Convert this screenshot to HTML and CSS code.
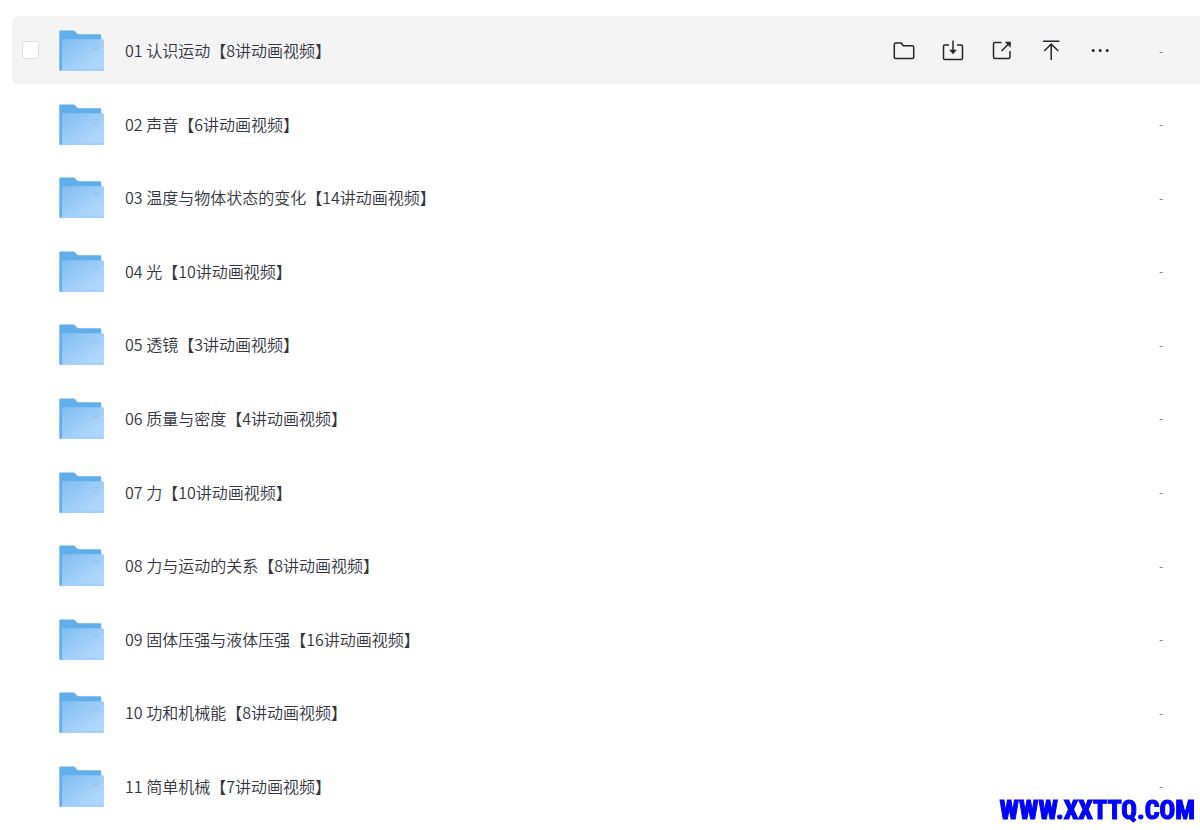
FILE: index.html
```
<!DOCTYPE html>
<html lang="zh-CN">
<head>
  <meta charset="UTF-8">
  <meta name="viewport" content="width=device-width, initial-scale=1.0">
  <title>动画视频</title>
  <link rel="stylesheet" href="styles.css">
</head>
<body>

  <!-- Icono de carpeta, compartido por todas las filas -->
  <svg class="sprite" aria-hidden="true">
    <defs>
      <linearGradient id="front" x1="0" y1="0" x2="1" y2="1">
        <stop offset="0" stop-color="#7fbdf2"/>
        <stop offset="0.75" stop-color="#add5fb"/>
        <stop offset="1" stop-color="#b2d9ff"/>
      </linearGradient>
    </defs>
    <symbol id="folder" viewBox="0 -2 46 44">
      <path d="M1 0.500H14.500Q15.500 0.500 16 1.200L18 3.600Q18.600 4.200 19.500 4.200H41Q42.200 4.200 42.200 5.400V41H1.500Q0.300 41 0.300 39.500V1.500Q0.300 0.500 1 0.500Z" fill="#62aeeb"/>
      <path d="M4 9.200H43.500Q45 9.200 45 10.700V39.500Q45 41 43.500 41H2.200Q3 40.500 3 39V10.200Q3 9.200 4 9.200Z" fill="url(#front)"/>
      <path d="M3 38.500H45V39.500Q45 41 43.500 41H2.200Q3 40.500 3 39Z" fill="#a2d0fa"/>
      <path d="M33.500 15.500H39.500M33.500 18.500H39.500" stroke="#8cc3f3" stroke-width="1"/>
    </symbol>
  </svg>

  <ul class="file-list" id="fileList">
    <li class="file-row active">
      <input type="checkbox" class="check" aria-label="01 认识运动【8讲动画视频】">
      <svg class="folder"><use href="#folder"/></svg>
      <a href="#" class="name">01 认识运动【8讲动画视频】</a>
      <div class="actions">
        <button type="button" aria-label="打开">
          <svg viewBox="0 -1 24 24"><path d="M3.800 4H9.200L11.200 6.800H20.200Q21.700 6.800 21.700 8.300V18Q21.700 19.500 20.200 19.500H3.800Q2.300 19.500 2.300 18V5.500Q2.300 4 3.800 4Z"/></svg>
        </button>
        <button type="button" aria-label="下载">
          <svg viewBox="0 -1 24 24"><path d="M8 6H3.800Q2.500 6 2.500 7.300V19.200Q2.500 20.500 3.800 20.500H20.200Q21.500 20.500 21.500 19.200V7.300Q21.500 6 20.200 6H16M12 1.500V13"/><path class="solid" d="M9.800 11.500H14.200L12 14Z"/></svg>
        </button>
        <button type="button" aria-label="分享">
          <svg viewBox="0 -1 24 24"><path d="M11.500 3.500H5Q3.500 3.500 3.500 5V18Q3.500 19.500 5 19.500H18.500Q20 19.500 20 18V12M11.500 12L19 4.500"/><path class="solid" d="M16.500 3.500H20V7Z"/></svg>
        </button>
        <button type="button" aria-label="置顶">
          <svg viewBox="0 -1 24 24"><path d="M4 2.300H20.500M12.200 21V5.500M5.200 12L12.200 5L19.200 12"/></svg>
        </button>
        <button type="button" aria-label="更多">
          <svg viewBox="0 0 24 24"><g class="dots"><circle cx="5.200" cy="12.500" r="1.500"/><circle cx="12.200" cy="12.500" r="1.500"/><circle cx="19.200" cy="12.500" r="1.500"/></g></svg>
        </button>
      </div>
      <span class="size">-</span>
    </li>
  </ul>

  <div class="watermark">WWW.XXTTQ.COM</div>

  <script>
    const lista = document.getElementById("fileList");

    const carpetas = [
      "02 声音【6讲动画视频】",
      "03 温度与物体状态的变化【14讲动画视频】",
      "04 光【10讲动画视频】",
      "05 透镜【3讲动画视频】",
      "06 质量与密度【4讲动画视频】",
      "07 力【10讲动画视频】",
      "08 力与运动的关系【8讲动画视频】",
      "09 固体压强与液体压强【16讲动画视频】",
      "10 功和机械能【8讲动画视频】",
      "11 简单机械【7讲动画视频】"
    ];

    carpetas.forEach((nombre) => {
      const li = document.createElement("li");
      li.className = "file-row";
      li.innerHTML = `
        <svg class="folder"><use href="#folder"/></svg>
        <a href="#" class="name">${nombre}</a>
        <span class="size">-</span>`;
      lista.appendChild(li);
    });
  </script>
</body>
</html>
```
FILE: styles.css
```
* {
  box-sizing: border-box;
}

body {
  margin: 0;
  background: #fff;
  color: #33353f;
  font-family: "Noto Sans CJK SC", sans-serif;
  font-size: 16px;
  line-height: 24px;
}

.sprite {
  position: absolute;
  width: 0;
  height: 0;
}

.file-list {
  display: flex;
  flex-direction: column;
  justify-content: space-between;
  min-height: 100vh;
  margin: 0;
  padding: 16px 0 10px 12px;
  list-style: none;
}

.file-row {
  display: grid;
  grid-template-columns: 17px 46px 1fr auto 24px;
  column-gap: 20px;
  align-items: center;
  height: 68px;
  padding: 0 27px 0 10px;
  border-radius: 6px 0 0 6px;
}

.active {
  background: #f4f4f4;
}

.check {
  grid-column: 1;
  appearance: none;
  width: 17px;
  height: 18px;
  margin: 0;
  background: #fff;
  border: 1px solid #dedede;
  border-radius: 3px;
}

.folder {
  grid-column: 2;
  width: 46px;
  height: 44px;
}

.name {
  grid-column: 3;
  color: inherit;
  font-weight: 350;
  text-decoration: none;
  white-space: nowrap;
}

.actions {
  grid-column: 4;
  display: flex;
  gap: 25px;
  margin-right: 17px;
}

.actions button {
  width: 24px;
  height: 24px;
  padding: 0;
  background: none;
  border: none;
  cursor: pointer;
}

.actions svg {
  display: block;
  width: 24px;
  height: 24px;
  fill: none;
  stroke: #25262b;
  stroke-width: 1.5;
}

.actions .solid {
  fill: #25262b;
}

.actions .dots {
  fill: #25262b;
  stroke: none;
}

.size {
  grid-column: 5;
  padding-top: 1px;
  color: #74757b;
  font-size: 12px;
  text-align: center;
}

.watermark {
  position: fixed;
  right: 5px;
  bottom: 4px;
  color: #00f;
  font-family: "Liberation Sans Narrow", "Roboto Condensed", "DejaVu Sans Condensed", sans-serif;
  font-size: 26px;
  font-weight: 800;
  line-height: 32px;
  -webkit-text-stroke: 1px #00f;
}
```
